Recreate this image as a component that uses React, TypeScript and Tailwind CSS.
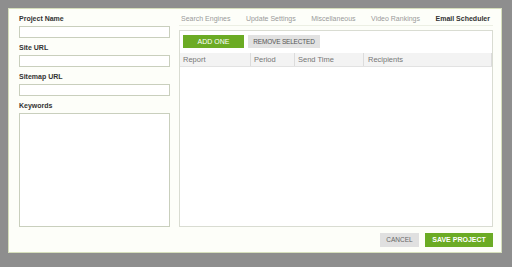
const tabs = ["Search Engines", "Update Settings", "Miscellaneous", "Video Rankings"];

function Field({ label }: { label: string }) {
  return (
    <div className="flex flex-col">
      <label className="h-[10px] text-[7px] leading-[10px] font-bold text-[#333]">{label}</label>
      <input className="mt-[2px] h-[12px] w-full border border-[#c9cfbd] bg-white" />
    </div>
  );
}

export default function App() {
  return (
    <div
      className="w-[512px] h-[267px] bg-[#8e8e8e] pt-[8px] pl-[8px] pr-[10px] pb-[14px]"
      style={{ fontFamily: "'Liberation Sans', Arial, sans-serif" }}
    >
      <div className="h-full border border-[#d6dfbc] bg-[#fdfef9] pt-[5px] pl-[10px] pr-[8px] pb-[5px] flex flex-col">
        <div className="flex flex-1 gap-[9px]">
          {/* left column */}
          <div className="w-[151px] flex flex-col gap-[5px]">
            <Field label="Project Name" />
            <Field label="Site URL" />
            <Field label="Sitemap URL" />
            <div className="flex flex-col flex-1">
              <label className="h-[10px] text-[7px] leading-[10px] font-bold text-[#333]">Keywords</label>
              <textarea className="mt-[2px] flex-1 w-full border border-[#c9cfbd] bg-white resize-none" />
            </div>
          </div>

          {/* right column */}
          <div className="flex-1 flex flex-col">
            <div className="h-[12px] border-b border-[#ecefe4] flex justify-between pl-[2px] pr-[3px] text-[7px] leading-[10px]">
              {tabs.map((t) => (
                <span key={t} className="text-[#9a9a9a]">{t}</span>
              ))}
              <span className="font-bold text-[#333]">Email Scheduler</span>
            </div>
            <div className="mt-[4px] flex-1 border border-[#d9dcd2] bg-white flex flex-col">
              <div className="flex gap-[4px] pt-[4px] pl-[3px]">
                <button className="w-[61px] h-[13px] bg-[#6bab24] text-white text-[7px] leading-[13px]">ADD ONE</button>
                <button className="w-[72px] h-[13px] bg-[#e2e2e2] text-[#555] text-[6.5px] leading-[13px] tracking-[-0.2px]">
                  REMOVE SELECTED
                </button>
              </div>
              <div className="mt-[5px] h-[14px] bg-[#f3f3f3] border-b border-[#e2e2e2] flex text-[7.5px] leading-[13px] text-[#777]">
                <div className="w-[71px] pl-[3px] border-r border-[#dcdcdc]">Report</div>
                <div className="w-[44px] pl-[3px] border-r border-[#dcdcdc]">Period</div>
                <div className="w-[69px] pl-[3px] border-r border-[#dcdcdc]">Send Time</div>
                <div className="flex-1 pl-[4px] border-r border-[#dcdcdc]">Recipients</div>
              </div>
            </div>
          </div>
        </div>

        <div className="mt-[6px] flex justify-end gap-[6px]">
          <button className="w-[39px] h-[14px] bg-[#e0e0e0] text-[#666] text-[6.5px] leading-[14px]">CANCEL</button>
          <button className="w-[68px] h-[14px] bg-[#6bab24] text-white text-[7px] leading-[14px] font-bold">SAVE PROJECT</button>
        </div>
      </div>
    </div>
  );
}
